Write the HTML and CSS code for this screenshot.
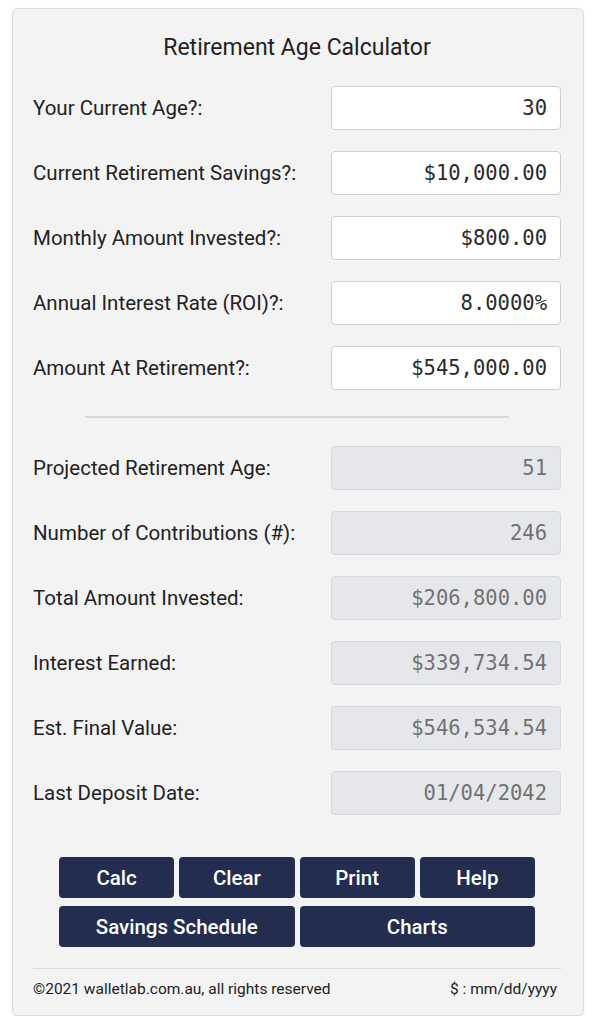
FILE: index.html
```html
<!DOCTYPE html>
<html>

<head>
  <title>Retirement Age Calculator</title>
  <link rel="stylesheet" href="styles.css">
</head>

<body>
  <div class="calc-card">
    <h1>Retirement Age Calculator</h1>

    <div class="calc-rows">
      <label>Your Current Age?:</label>
      <div class="field">30</div>

      <label>Current Retirement Savings?:</label>
      <div class="field">$10,000.00</div>

      <label>Monthly Amount Invested?:</label>
      <div class="field">$800.00</div>

      <label>Annual Interest Rate (ROI)?:</label>
      <div class="field">8.0000%</div>

      <label>Amount At Retirement?:</label>
      <div class="field">$545,000.00</div>
    </div>

    <hr class="divider">

    <div class="calc-rows">
      <label>Projected Retirement Age:</label>
      <div class="field readonly">51</div>

      <label>Number of Contributions (#):</label>
      <div class="field readonly">246</div>

      <label>Total Amount Invested:</label>
      <div class="field readonly">$206,800.00</div>

      <label>Interest Earned:</label>
      <div class="field readonly">$339,734.54</div>

      <label>Est. Final Value:</label>
      <div class="field readonly">$546,534.54</div>

      <label>Last Deposit Date:</label>
      <div class="field readonly">01/04/2042</div>
    </div>

    <div class="buttons">
      <button>Calc</button>
      <button>Clear</button>
      <button>Print</button>
      <button>Help</button>
      <button class="wide">Savings Schedule</button>
      <button class="wide">Charts</button>
    </div>

    <div class="footer">
      <span>&copy;2021 walletlab.com.au, all rights reserved</span>
      <span>$ : mm/dd/yyyy</span>
    </div>
  </div>
</body>

</html>
```

FILE: styles.css
```css
body {
  margin: 0;
  background-color: #ffffff;
  font-family: Roboto, "Liberation Sans", sans-serif;
  color: #222;
}

.calc-card {
  margin: 8px 0 0 12px;
  width: 572px;
  height: 1008px;
  box-sizing: border-box;
  background-color: #f3f3f3;
  border: 1px solid #dcdcdc;
  border-radius: 6px;
  box-shadow: 0 1px 3px rgba(0, 0, 0, 0.08);
  padding: 0 22px 0 20px;
}

h1 {
  margin: 0;
  padding-top: 25px;
  height: 52px;
  font-size: 23px;
  font-weight: 400;
  text-align: center;
  line-height: 28px;
}

.calc-rows {
  display: grid;
  grid-template-columns: 1fr 230px;
  grid-auto-rows: 44px;
  row-gap: 21px;
  align-items: center;
}

.calc-rows label {
  font-size: 20.5px;
  color: #222;
  white-space: nowrap;
}

.field {
  height: 44px;
  box-sizing: border-box;
  background-color: #fff;
  border: 1px solid #cfcfcf;
  border-radius: 4px;
  padding: 0 13px;
  display: flex;
  align-items: center;
  justify-content: flex-end;
  font-family: "DejaVu Sans Mono", "Liberation Mono", monospace;
  font-size: 20.5px;
  color: #2a2a2a;
}

.field.readonly {
  background-color: #e5e7eb;
  border-color: #d6d8dc;
  color: #727272;
}

.divider {
  width: 424px;
  margin: 26px auto 28px;
  border: none;
  border-top: 2px solid #d9d9d9;
}

.buttons {
  width: 476px;
  margin: 42px auto 0;
  display: grid;
  grid-template-columns: repeat(4, 1fr);
  column-gap: 5px;
  row-gap: 8px;
}

.buttons button {
  height: 41px;
  background-color: #232d4f;
  color: #fff;
  border: none;
  border-radius: 4px;
  font-family: Roboto, "Liberation Sans", sans-serif;
  font-size: 20.5px;
  font-weight: 500;
  cursor: pointer;
}

.buttons button.wide {
  grid-column: span 2;
}

.footer {
  margin-top: 21px;
  border-top: 1px solid #dadada;
  padding-top: 11px;
  display: flex;
  justify-content: space-between;
  font-size: 15.5px;
  color: #222;
  padding-right: 4px;
}
```
